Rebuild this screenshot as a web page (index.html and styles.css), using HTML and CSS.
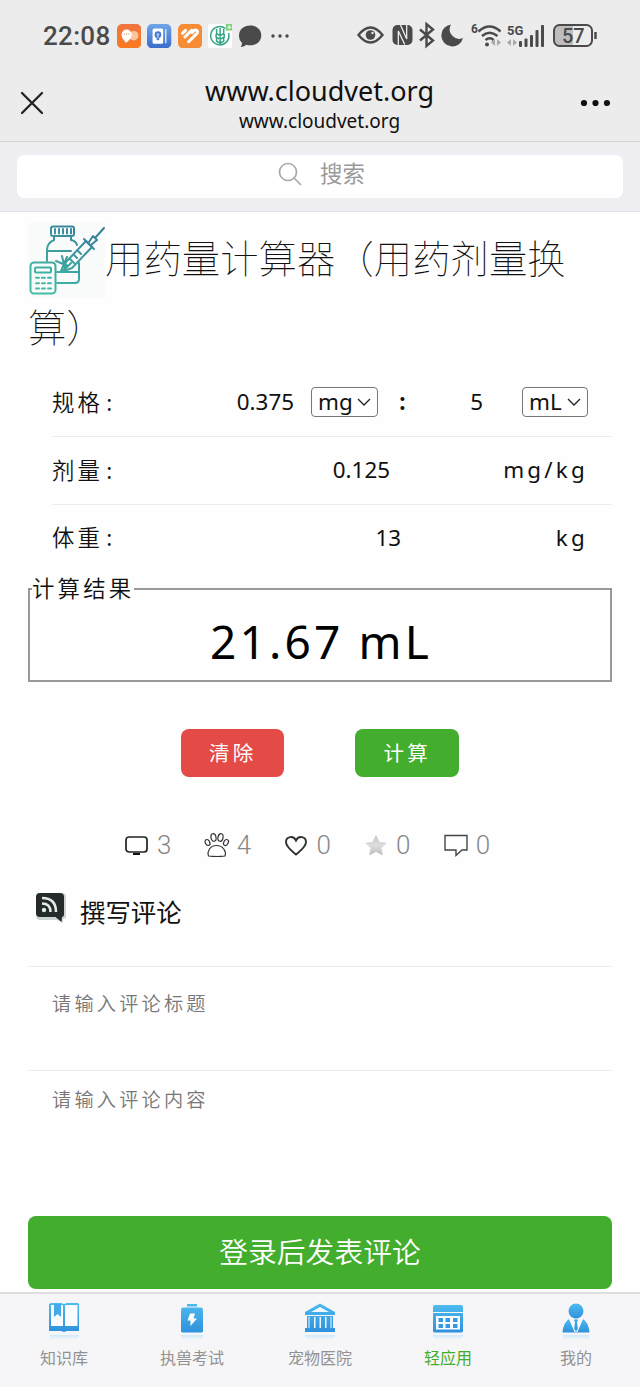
FILE: index.html
```html
<!DOCTYPE html>
<html lang="zh-CN">
<head>
<meta charset="utf-8">
<title>用药量计算器</title>
<link rel="stylesheet" href="styles.css">
</head>
<body>
<header class="top">
  <div class="status">
    <div class="status-left">
      <span class="time">22:08</span>
      <svg class="app" viewBox="0 0 24 24"><defs><linearGradient id="or" x2="0" y2="1"><stop stop-color="#ef7440"/><stop offset="1" stop-color="#fa7a20"/></linearGradient><linearGradient id="bl" x2="0" y2="1"><stop stop-color="#6fa5e8"/><stop offset="1" stop-color="#3b6ccb"/></linearGradient></defs><rect width="24" height="24" rx="5" fill="url(#or)"/><circle cx="16.500" cy="11.500" r="4.700" fill="#fbc59b"/><path d="M9.500 5.500a5 5 0 0 1 5 5c0 3.500-3 6-5.500 8-1.500-2-4.500-4.500-4.500-8a5 5 0 0 1 5-5z" fill="#fff"/><g fill="#ee8150"><circle cx="7.200" cy="10" r=".7"/><circle cx="9.500" cy="10" r=".7"/><circle cx="11.800" cy="10" r=".7"/></g></svg>
      <svg class="app" viewBox="0 0 24 24"><rect width="24" height="24" rx="5" fill="url(#bl)"/><rect x="5.500" y="4.500" width="10.500" height="15" rx="1.500" fill="#fff"/><path d="M18.500 5v14" stroke="#d5e5fb" stroke-width="1.500"/><circle cx="10.800" cy="10.500" r="3.300" fill="#477bd2"/><path d="M10.800 12v4" stroke="#477bd2" stroke-width="2.500"/><path d="M9.500 10h2.600M10.800 10v4" stroke="#fff" stroke-width=".8"/></svg>
      <svg class="app" viewBox="0 0 24 24"><rect width="24" height="24" rx="5" fill="#f78c36"/><path d="M4.500 9 7.500 6.300M6.800 12.800l6.700-6.500M10.500 17.500l8.300-8.300a2 2 0 0 0-2.800-2.800l-2 2" fill="none" stroke="#fff" stroke-width="3" stroke-linecap="round"/></svg>
      <svg class="app" viewBox="0 0 24 24"><rect width="24" height="24" fill="#fff"/><g fill="none" stroke="#35a487" stroke-width="1.500"><path d="M17 4.300A9 9 0 1 0 20.300 9M12 4v17M8.500 5v4.500l3.500 2 3.500-2V5M8 10v3l4 2 4-2v-3M8.500 14v3l3.500 2 3.500-2v-3"/></g><rect x="17.500" width="6.500" height="6.500" fill="#83cf7c"/><path d="M19 3.200h4M21 1.200v4" stroke="#fff"/></svg>
      <svg class="app" viewBox="0 0 24 24"><path d="M12 1.500c6.500 0 11 4.300 11 9.800S18.500 21 12 21c-1.500 0-2.700-.2-3.800-.6C6.500 22 4.500 22.600 2.500 22.600c1-1 1.500-2.500 1.300-4A9.300 9.300 0 0 1 1 11.300C1 5.800 5.500 1.500 12 1.500z" fill="#4a4a4a"/></svg>
      <svg class="dots" viewBox="0 0 18 24"><g fill="#4a4a4a"><circle cx="2" cy="12" r="1.700"/><circle cx="9" cy="12" r="1.700"/><circle cx="16" cy="12" r="1.700"/></g></svg>
    </div>
    <svg class="status-right" viewBox="0 0 244 28" width="244" height="28">
      <g fill="none" stroke="#4a4a4a" stroke-width="2">
        <path d="M2.500 14Q14.500-1 26.500 14 14.500 29 2.500 14z" stroke-width="2.400"/><circle cx="14.500" cy="14" r="4.800" fill="#4a4a4a" stroke="none"/><circle cx="16.500" cy="12" r="1.200" fill="#ececec" stroke="none"/>
        <rect x="36.500" y="4" width="20" height="20" rx="5" fill="#4a4a4a" stroke="none"/><path d="M42.300 24V10l6.500 13.500M44.500 4l6.200 14V4" stroke="#ececec" stroke-width="1.300"/>
        <path d="m64 8.500 13 11-6.500 5.500V3L77 8.500l-13 11" stroke-width="2.400"/>
        <path d="M95 3.500A11 11 0 1 0 107 17 9.500 9.500 0 0 1 95 3.500z" fill="#4a4a4a" stroke="none"/>
        <path d="M122.500 10.500q11-10 22 0M126 15q7.500-6.500 15.500 0M129.500 19q4.500-3.500 8 0" stroke-width="2.600"/><circle cx="131" cy="23.500" r="2" fill="#4a4a4a" stroke="none"/>
      </g>
      <g fill="#aaa"><path d="M139 18v7l-4-3.500zM141 18v7l4-3.500zM155 18v7l-4-3.500zM157 18v7l4-3.500z"/></g>
      <text x="115" y="12" class="net-small">6</text><text x="151" y="13.500" class="net">5G</text>
      <g fill="#4a4a4a"><rect x="163" y="20" width="3" height="6" rx="1"/><rect x="168.500" y="17.500" width="3" height="8.500" rx="1"/><rect x="174" y="14" width="3" height="12" rx="1"/><rect x="179.500" y="9" width="3" height="17" rx="1"/><rect x="185" y="4" width="3" height="22" rx="1"/></g>
      <path d="M203 4h14v21h-14a5 5 0 0 1-5-5V9a5 5 0 0 1 5-5z" fill="#bdbdbd"/><rect x="198" y="4" width="38" height="21" rx="5.500" fill="none" stroke="#4a4a4a" stroke-width="2"/><path d="M239.500 11v7" stroke="#4a4a4a" stroke-width="2.500"/>
      <text x="206" y="21.500" class="battery">57</text>
    </svg>
  </div>
  <div class="nav">
    <svg class="close" viewBox="0 0 24 24"><path d="m2 2 20 20M22 2 2 22" stroke="#222" stroke-width="2.300" stroke-linecap="round"/></svg>
    <div class="address"><div class="site">www.cloudvet.org</div><div class="host">www.cloudvet.org</div></div>
    <svg class="more" viewBox="0 0 30 8"><g fill="#111"><circle cx="4" cy="4" r="3.100"/><circle cx="15.500" cy="4" r="3.100"/><circle cx="27" cy="4" r="3.100"/></g></svg>
  </div>
</header>
<div class="search-bar"><div class="search">
  <svg viewBox="0 0 24 24" width="24" height="24"><g fill="none" stroke="#aaa" stroke-width="1.700"><circle cx="10" cy="10" r="8.500"/><path d="m16 16 7 7"/></g></svg><span>搜索</span>
</div></div>
<main class="content">
  <h1 class="title"><svg class="title-icon" viewBox="0 0 77 76"><defs><linearGradient id="tl" gradientUnits="userSpaceOnUse" x1="60" y1="5" x2="15" y2="70"><stop stop-color="#387f9c"/><stop offset="1" stop-color="#43bda4"/></linearGradient></defs><rect width="77" height="76" fill="#fafcfb"/><g fill="none" stroke="url(#tl)" stroke-width="2" stroke-linejoin="round" stroke-linecap="round"><rect x="23" y="4.500" width="23" height="9.500" rx="2"/><path d="M27 7v4.500M31 7v4.500M35 7v4.500M39 7v4.500M43 7v4.500M26 14v4q-7 3-7 10v11M43 14v4q5 1 6 5M51 41v16q0 4-4 4H29M19 29h24M29 50h21"/><path d="m38 40 20-21 6 6-20 21-8 3z" fill="#fafcfb"/><path d="m56 17 10 10M61 20l4-6 4 4-6 5M67 16l9-10M42 37l4 4M46 33l3 3M50 29l3 3M34 34l3 13M28 39l12 5M39 35l-6 14M35 49l8-8"/><rect x="2.500" y="40.500" width="25" height="31" rx="3.500" fill="#fafcfb"/><rect x="7" y="45.500" width="16" height="5" rx="1"/><path d="M8 55.800h3M14 55.800h3M20 55.800h3M8 61.200h3M14 61.200h3M20 61.200h3M8 66.600h3M14 66.600h3M20 66.600h3"/></g></svg>用药量计算器（用药剂量换算）</h1>
  <section class="form">
    <div class="row"><span class="label">规格<i class="colon">:</i></span><span class="amount">0.375</span><span class="select">mg<svg viewBox="0 0 14 8"><path d="m1 1 6 6 6-6"/></svg></span><b class="ratio">:</b><span class="volume">5</span><span class="select last">mL<svg viewBox="0 0 14 8"><path d="m1 1 6 6 6-6"/></svg></span></div>
    <div class="row"><span class="label">剂量<i class="colon">:</i></span><span class="value dose">0.125</span><span class="unit">mg/kg</span></div>
    <div class="row"><span class="label">体重<i class="colon">:</i></span><span class="value weight">13</span><span class="unit">kg</span></div>
  </section>
  <fieldset class="result"><legend>计算结果</legend><output>21.67 mL</output></fieldset>
  <div class="actions"><button class="btn clear">清除</button><button class="btn calc">计算</button></div>
  <div class="stats">
    <span class="stat"><svg viewBox="0 0 26 26"><rect x="2" y="5" width="21" height="15" rx="3" fill="none" stroke="#222" stroke-width="1.700"/><path d="M9 21h7v2H9z" fill="#111"/></svg>3</span>
    <span class="stat"><svg viewBox="0 0 26 26"><g fill="none" stroke="#333" stroke-width="1.200"><path d="M4.500 24c-1.500-4 1-10.500 8-10.500s10 6.500 8.500 10.500q-8 1-16.500 0z"/><ellipse cx="9.500" cy="5.500" rx="2.500" ry="3.800" transform="rotate(-12 9.500 5.500)"/><ellipse cx="16.500" cy="5.500" rx="2.500" ry="3.800" transform="rotate(12 16.500 5.500)"/><ellipse cx="3.500" cy="10.500" rx="2.200" ry="3.200" transform="rotate(-28 3.500 10.500)"/><ellipse cx="22" cy="10.500" rx="2.200" ry="3.200" transform="rotate(28 22 10.500)"/></g></svg>4</span>
    <span class="stat"><svg viewBox="0 0 26 26"><path d="M13 22.500C9.500 19.500 3 15 3 10c0-5.500 7.500-7 10-1.500 2.500-5.500 10-4 10 1.500 0 5-6.500 9.500-10 12.500z" fill="none" stroke="#333" stroke-width="1.900"/></svg>0</span>
    <span class="stat"><svg viewBox="0 0 26 26"><defs><linearGradient id="st" x2="0" y2="1"><stop stop-color="#c3c3c3"/><stop offset=".5" stop-color="#dedede"/><stop offset="1" stop-color="#bdbdbd"/></linearGradient></defs><path d="m13 3 3.400 6.800 7.600 1-5.600 5.200 1.500 7.500-6.900-3.600-6.900 3.600L7.600 16 2 10.800l7.600-1z" fill="url(#st)"/></svg>0</span>
    <span class="stat"><svg viewBox="0 0 26 26"><path d="M2 3.500h22V18h-5l-6 5.500V18H2z" fill="none" stroke="#444" stroke-width="1.400"/></svg>0</span>
  </div>
  <h2 class="write"><svg viewBox="0 0 32 32" width="32" height="32"><path d="M5 1h22q4 0 4 4v19q0 3-3 3v4l-6-3H5q-4 0-4-4V5q0-4 4-4z" fill="#cdd5d2"/><path d="M5 1h20q4 0 4 4v17q0 3-2 3l-.5 5-6-5H5q-4 0-4-4V5q0-4 4-4z" fill="#252b2a"/><g fill="none" stroke="#e4e9e8" stroke-width="2.600"><path d="M7 6q14 0 14 14M7 11.500q8.500 0 8.500 8.500"/></g><circle cx="9" cy="18" r="2.200" fill="#e4e9e8"/></svg>撰写评论</h2>
  <div class="field subject">请输入评论标题</div>
  <div class="field body-text">请输入评论内容</div>
  <button class="submit">登录后发表评论</button>
</main>
<nav class="tabs">
  <a class="tab"><svg viewBox="0 0 32 38"><defs><linearGradient id="tb" x2="0" y2="1"><stop stop-color="#4dbbee"/><stop offset="1" stop-color="#2f91dc"/></linearGradient><linearGradient id="rf" x2="0" y2="1"><stop stop-color="#d0e9fa"/><stop offset="1" stop-color="#f7f7f8"/></linearGradient></defs><path d="M2 33h29v5H2z" fill="url(#rf)"/><path d="M3 1h10l3 1 3-1h11l1 1v27H19l-3 1-3-1H1V2z" fill="url(#tb)"/><path d="M3 3h11q1 0 1 1v20H3zM17 4q0-1 1-1h11.500v21H17z" fill="#fafcff"/><path d="M6 2h7v13l-3.500-3L6 15z" fill="#43a9e7"/></svg>知识库</a>
  <a class="tab"><svg viewBox="0 0 32 38"><path d="M5 33h22v5H5z" fill="url(#rf)"/><path d="M11 2h10v2.500H11zM5 8q0-2.500 2-2.500h18q2 0 2 2.500v21q0 1.500-2 1.500H7q-2 0-2-1.500z" fill="url(#tb)"/><path d="M14 11.500h5l-1.500 5h3.500L14.500 24v-5.500H11.500z" fill="#fff"/></svg>执兽考试</a>
  <a class="tab"><svg viewBox="0 0 32 38"><path d="M1 33h30v5H1z" fill="url(#rf)"/><path d="m16 1.500 15 8.500v3H1v-3zM3 14h26v12h2v4H1v-4h2z" fill="url(#tb)"/><path d="m16 5 9 5H7zM4.500 15v11h1V15zm5.500 0v11h1.500V15zm5.500 0v11H17V15zm5.500 0v11h1.500V15zm5.500 0v11h1V15z" fill="#eef8ff"/></svg>宠物医院</a>
  <a class="tab active"><svg viewBox="0 0 32 38"><path d="M1 33h30v5H1z" fill="url(#rf)"/><path d="M1 5q0-2 2-2h26q2 0 2 2v5H1zM1 11h30v18q0 1.500-2 1.500H3q-2 0-2-1.500z" fill="url(#tb)"/><path d="M4 14h24v13.500H4z" fill="#fafcff"/><path d="M6.500 16H11v4H6.500zm7 0H18v4h-4.500zm7.500 0h4.500v4H21zM6.500 22H11v4H6.500zm7 0H18v4h-4.500zm7.500 0h4.500v4H21z" fill="#349be2"/></svg>轻应用</a>
  <a class="tab"><svg viewBox="0 0 32 38"><path d="M3 33h26v5H3z" fill="url(#rf)"/><circle cx="16" cy="9" r="7.500" fill="url(#tb)"/><path d="M9 17q-6 4-6.500 13.500h27Q29 21 23 17l-5.500 13h-3z" fill="url(#tb)"/><path d="m9.500 17 5.500 13h2l5.500-13-6.500 1z" fill="#f7f7f8"/><path d="M14 17.500h4l-1 3 1 6-2 3.500-2-3.500 1-6z" fill="#3ca2e4"/></svg>我的</a>
</nav>
</body>
</html>
```
FILE: styles.css
```css
* { box-sizing: border-box; }
body { margin: 0; width: 640px; height: 1387px; display: flex; flex-direction: column; background: #fefefe; color: #111; font-family: "Noto Sans", "Noto Sans CJK SC", sans-serif; overflow: hidden; }
svg { flex: none; }
.top { height: 142px; flex: none; background: #ececec; border-bottom: 1px solid #d6d6d6; }
.status { height: 72px; display: flex; justify-content: space-between; padding: 0 40px 0 43px; }
.status-left { display: flex; height: 72px; align-items: center; gap: 6px; }
.time { width: 68px; font: 500 26px/30px Roboto, sans-serif; color: #4a4a4a; letter-spacing: .3px; }
.app { width: 24.300px; height: 24.300px; }
.dots { width: 18px; height: 24px; margin-left: 3px; }
.status-right { margin: 21px 0 0; }
.net-small { font: 700 12px Roboto; fill: #4a4a4a; }
.net { font: 700 13px Roboto; fill: #4a4a4a; }
.battery { font: 500 20px Roboto; fill: #4a4a4a; }
.nav { height: 69px; display: flex; align-items: center; justify-content: space-between; padding: 0 30px 7px 20px; }
.close { width: 24px; height: 24px; }
.more { width: 30px; height: 8px; }
.address { text-align: center; padding: 2px 0 0 15px; }
.site { font-size: 27px; line-height: 34px; color: #111; white-space: nowrap; }
.host { font-size: 19px; line-height: 27px; color: #111; }
.search-bar { height: 70px; flex: none; background: #eeeef2; border-bottom: 1px solid #e2e2e3; padding: 13px 17px; }
.search { height: 43px; border-radius: 7px; background: #fff; display: flex; justify-content: center; align-items: center; gap: 18px; padding: 0 0 5px 3px; color: #999; font-size: 22.400px; line-height: 32px; }
.content { height: 1080px; flex: none; padding: 10px 28px 0; }
.title { margin: 0; height: 146px; font-size: 38.400px; line-height: 69px; font-weight: 100; font-family: "Noto Sans CJK SC", sans-serif; color: #111; }
.title-icon { width: 77px; height: 76px; margin: -16px 0 -10px; vertical-align: middle; }
.form { padding-left: 24px; }
.row { height: 68px; display: flex; align-items: center; border-bottom: 1px solid #ececec; font-size: 22.400px; padding-bottom: 2px; }
.row:first-child { height: 69px; padding-bottom: 1px; }
.row:last-child { height: 67px; border-bottom: 0; padding-bottom: 3px; }
.label { width: 104px; letter-spacing: 3.200px; font-family: "Noto Sans CJK SC", sans-serif; font-weight: 350; padding-bottom: 2px; }
.colon { font-style: normal; padding-left: 3px; }
.amount { width: 138px; text-align: right; margin-right: 17px; }
.select { width: 67px; height: 30px; border: 1px solid #777; border-radius: 4px; display: flex; align-items: center; justify-content: space-between; padding: 0 6px; line-height: 28px; }
.select svg { width: 14px; height: 8px; fill: none; stroke: #222; stroke-width: 1.300; }
.ratio { width: 49px; text-align: center; font-weight: 700; }
.volume { width: 56px; text-align: right; }
.select.last { margin-left: 39px; width: 66px; }
.value { text-align: right; }
.dose { width: 234px; }
.weight { width: 245px; }
.unit { margin-left: auto; padding-right: 24px; letter-spacing: 3.200px; }
.result { margin: 0; height: 110px; border: 2px solid #999; padding: 0 0 0 2px; min-width: 0; }
.result legend { height: 34px; line-height: 31px; padding: 0; font-size: 22.400px; letter-spacing: 3.200px; font-weight: 350; font-family: "Noto Sans CJK SC", sans-serif; }
.result output { display: block; text-align: center; font-size: 46px; line-height: 70px; letter-spacing: 3.200px; color: #000; }
.actions { display: flex; justify-content: center; gap: 71px; padding: 47px 1px 0 0; height: 138px; }
.btn { width: 103.500px; height: 48px; border: 0; border-radius: 8px; padding: 0 0 3px 1px; color: #fff; font: 20.500px "Noto Sans CJK SC", sans-serif; letter-spacing: 3.200px; }
.clear { background: #e44b46; }
.calc { background: #43ad2e; }
.stats { display: flex; height: 50px; padding-left: 96px; align-items: center; }
.stat { width: 79.700px; display: flex; align-items: center; gap: 7px; color: #888; font-family: Roboto, sans-serif; font-weight: 300; font-size: 26px; }
.stat svg { width: 26px; height: 26px; }
.write { margin: 0; height: 97px; display: flex; align-items: flex-start; gap: 13px; padding: 22px 0 0 7px; border-bottom: 1px solid #ececec; font-size: 25.400px; font-weight: 400; line-height: 40px; color: #111; }
.field { padding-left: 24px; color: #777; font-size: 19.200px; letter-spacing: 3.200px; line-height: 30px; font-weight: 350; font-family: "Noto Sans CJK SC", sans-serif; }
.subject { height: 104px; padding-top: 21px; border-bottom: 1px solid #ececec; }
.body-text { height: 145px; padding-top: 13px; }
.submit { display: block; width: 584px; height: 73px; border: 0; border-radius: 8px; background: #43ad2e; color: #fff; font: 350 28.800px "Noto Sans CJK SC", sans-serif; padding: 0 0 4px; }
.tabs { height: 95px; flex: none; display: flex; background: #f6f6f8; border-top: 2px solid #dedee0; }
.tab { width: 128px; display: flex; flex-direction: column; align-items: center; padding-top: 8px; gap: 6px; color: #929292; font-size: 16px; line-height: 24px; }
.tab svg { width: 32px; height: 38px; }
.tab.active { color: #43ad2e; }
```
